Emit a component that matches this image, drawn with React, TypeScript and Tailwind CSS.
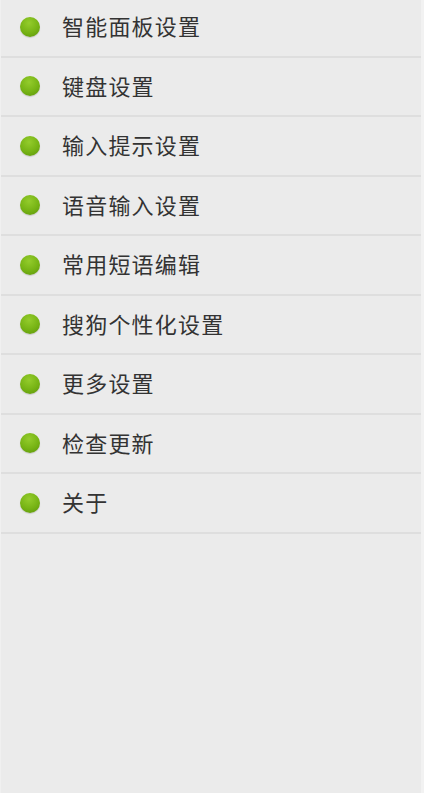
const items = [
  '智能面板设置',
  '键盘设置',
  '输入提示设置',
  '语音输入设置',
  '常用短语编辑',
  '搜狗个性化设置',
  '更多设置',
  '检查更新',
  '关于',
];

function GreenDot() {
  return (
    <span className="w-[20px] h-[20px] rounded-full flex-none bg-[radial-gradient(circle_at_45%_30%,#94cc2c_0%,#76b314_55%,#5a920a_100%)] shadow-[0_1px_1px_rgba(0,0,0,0.15)]" />
  );
}

export default function App() {
  return (
    <div
      className="w-[424px] h-[793px] overflow-hidden bg-[#ebebeb] flex"
      style={{ fontFamily: '"Noto Sans CJK SC", "Noto Sans", sans-serif' }}
    >
      <div className="w-[1px] bg-[#f0f0f0] flex-none" />
      <div className="flex-1 flex flex-col -mt-[2px]">
        {items.map((label) => (
          <div
            key={label}
            className="h-[59.5px] flex items-center border-b-2 border-[#dedede] flex-none"
          >
            <div className="w-[19px] flex-none" />
            <GreenDot />
            <span className="ml-[22px] pb-[3px] text-[22px] text-[#333333] leading-none tracking-[1.2px]">
              {label}
            </span>
          </div>
        ))}
      </div>
      <div className="w-[3px] bg-[#f2f2f2] flex-none" />
    </div>
  );
}
